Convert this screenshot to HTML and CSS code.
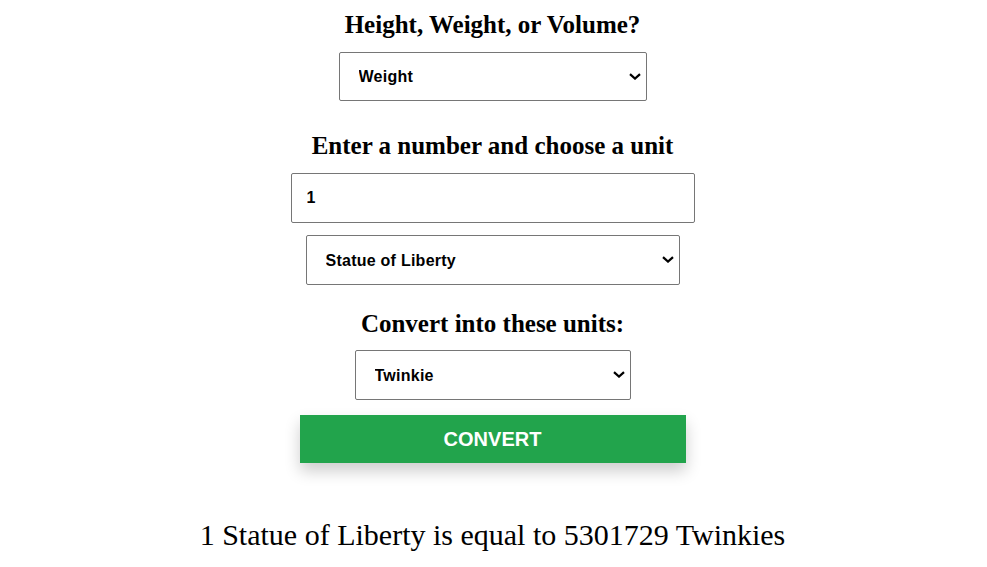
FILE: index.html
```html
<!DOCTYPE html>
<html>
<head>
<meta charset="utf-8">
<link rel="stylesheet" href="styles.css">
</head>
<body>
<main class="converter">
  <h2 class="label label-type">Height, Weight, or Volume?</h2>
  <div class="select-wrap wrap-type">
    <select class="field select">
      <option>Weight</option>
    </select>
    <svg class="chevron" width="12" height="7" viewBox="0 0 12 7"><path d="M1 1.2 L6 5.6 L11 1.2" fill="none" stroke="#000" stroke-width="2.2"/></svg>
  </div>
  <h2 class="label label-number">Enter a number and choose a unit</h2>
  <input class="field field-number" type="text" value="1">
  <div class="select-wrap wrap-from">
    <select class="field select">
      <option>Statue of Liberty</option>
    </select>
    <svg class="chevron" width="12" height="7" viewBox="0 0 12 7"><path d="M1 1.2 L6 5.6 L11 1.2" fill="none" stroke="#000" stroke-width="2.2"/></svg>
  </div>
  <h2 class="label label-to">Convert into these units:</h2>
  <div class="select-wrap wrap-to">
    <select class="field select">
      <option>Twinkie</option>
    </select>
    <svg class="chevron" width="12" height="7" viewBox="0 0 12 7"><path d="M1 1.2 L6 5.6 L11 1.2" fill="none" stroke="#000" stroke-width="2.2"/></svg>
  </div>
  <button class="convert">CONVERT</button>
  <p class="result">1 Statue of Liberty is equal to 5301729 Twinkies</p>
</main>
</body>
</html>
```
FILE: styles.css
```css
html, body {
  margin: 0;
  padding: 0;
  background: #fff;
}
.converter {
  display: flex;
  flex-direction: column;
  align-items: center;
  padding-right: 2px;
  font-family: "Liberation Serif", "Times New Roman", serif;
  color: #000;
}
.label {
  font-size: 25px;
  font-weight: bold;
  margin: 0;
  height: 30px;
  line-height: 30px;
}
.label-type {
  margin-top: 10px;
}
.label-number {
  margin-top: 30px;
}
.label-to {
  margin-top: 24px;
}
.field {
  font-family: "Liberation Sans", Arial, sans-serif;
  font-size: 16px;
  font-weight: bold;
  letter-spacing: 0.25px;
  color: #000;
  background: #fff;
  border: 1px solid #767676;
  border-radius: 2px;
  box-sizing: border-box;
  height: 50px;
  padding: 0 28px 0 19px;
  outline: none;
}
.select {
  appearance: none;
  -webkit-appearance: none;
  width: 100%;
  display: block;
}
.select-wrap {
  position: relative;
}
.chevron {
  position: absolute;
  right: 6px;
  top: 50%;
  margin-top: -4px;
  pointer-events: none;
}
.wrap-type {
  margin-top: 12px;
  width: 308px;
}
.wrap-type .select {
  height: 49px;
}
.field-number {
  margin-top: 12px;
  width: 404px;
  padding-left: 15px;
}
.wrap-from {
  margin-top: 12px;
  width: 374px;
}
.wrap-to {
  margin-top: 11px;
  width: 276px;
}
.convert {
  margin-top: 15px;
  width: 386px;
  height: 48px;
  border: none;
  background: #22a44c;
  color: #fff;
  font-family: "Liberation Sans", Arial, sans-serif;
  font-size: 20px;
  font-weight: bold;
  box-shadow: 0 8px 16px rgba(0, 0, 0, 0.2);
  cursor: pointer;
}
.result {
  margin: 54px 0 0;
  font-size: 30px;
  line-height: 36px;
}
```
